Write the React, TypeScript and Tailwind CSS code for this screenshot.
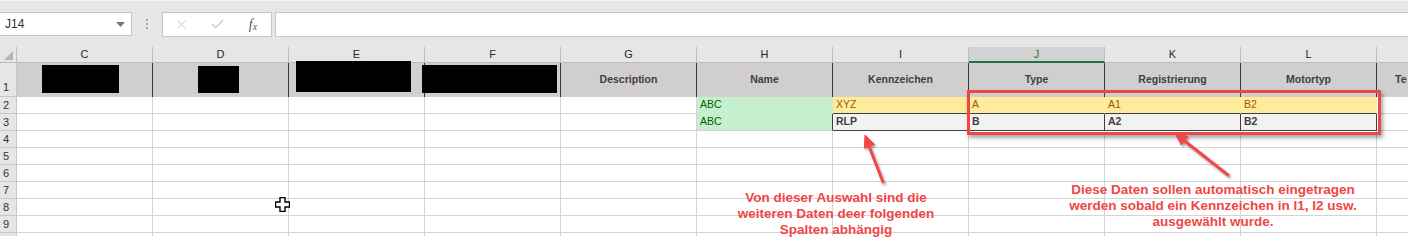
import { X, Check } from "lucide-react";

const COLS = ["C", "D", "E", "F", "G", "H", "I", "J", "K", "L"];

const HEADERS: Record<string, string> = {
  G: "Description",
  H: "Name",
  I: "Kennzeichen",
  J: "Type",
  K: "Registrierung",
  L: "Motortyp",
};

type Kind = "good" | "neutral" | "output";
type Cell = { text: string; kind: Kind };

const DATA: Record<number, Record<string, Cell>> = {
  2: {
    H: { text: "ABC", kind: "good" },
    I: { text: "XYZ", kind: "neutral" },
    J: { text: "A", kind: "neutral" },
    K: { text: "A1", kind: "neutral" },
    L: { text: "B2", kind: "neutral" },
  },
  3: {
    H: { text: "ABC", kind: "good" },
    I: { text: "RLP", kind: "output" },
    J: { text: "B", kind: "output" },
    K: { text: "A2", kind: "output" },
    L: { text: "B2", kind: "output" },
  },
};

// redaction boxes over row 1
const REDACTED: Record<string, string> = {
  C: "left-[25px] top-[2px] w-[77px] h-[28px]",
  D: "left-[45px] top-[3px] w-[41px] h-[27px]",
  E: "left-[7px] top-[-2px] w-[115px] h-[31px]",
  F: "left-[-3px] top-[2px] w-[135px] h-[28px]",
};

const cellClass = (row: number, col: string) => {
  const cell = DATA[row]?.[col];
  if (!cell) return "border-r border-b border-[#d4d4d4]";
  if (cell.kind === "good") {
    const right = row === 3 ? "border-r-[#3f3f3f]" : "border-r-[#c6efce]";
    const bottom = row === 3 ? "border-b-[#d4d4d4]" : "border-b-[#c6efce]";
    return `bg-[#c6efce] text-[#006100] border-r border-b ${right} ${bottom}`;
  }
  if (cell.kind === "neutral") {
    return "bg-[#ffeb9c] text-[#9c5700] border-r border-b border-r-[#ffeb9c] border-b-[#3f3f3f]";
  }
  return "bg-[#f2f2f2] text-[#3f3f3f] font-bold border-r border-b border-[#3f3f3f]";
};

const FormulaBar = () => (
  <div className="h-[47px] bg-[#e6e6e6] border-t border-[#f4f4f4] flex items-start pt-[11px]">
    <div className="w-[132px] h-[24px] bg-white border border-l-0 border-[#c6c6c6] flex items-center justify-between pl-[5px] pr-[6px]">
      <span className="text-[12px] text-[#333]">J14</span>
      <svg width="9" height="5" viewBox="0 0 9 5">
        <path d="M0 0h9L4.5 5z" fill="#777" />
      </svg>
    </div>
    <div className="w-[30px] h-[24px] flex flex-col items-center justify-center gap-[2px]">
      <span className="w-[2px] h-[2px] bg-[#a8a8a8]" />
      <span className="w-[2px] h-[2px] bg-[#a8a8a8]" />
      <span className="w-[2px] h-[2px] bg-[#a8a8a8]" />
    </div>
    <div className="w-[110px] h-[25px] bg-white border border-[#c6c6c6] flex items-center">
      <div className="w-[36px] flex justify-center">
        <X size={15} strokeWidth={1.3} color="#bdbdbd" />
      </div>
      <div className="w-[36px] flex justify-center">
        <Check size={15} strokeWidth={2.2} color="#c4c4c4" />
      </div>
      <div className="w-[36px] flex justify-center font-['Liberation_Serif',serif] italic text-[#555] leading-none">
        <span className="text-[14px]">f</span>
        <span className="text-[10px] mt-[4px]">x</span>
      </div>
    </div>
    <div className="flex-1 h-[25px] ml-[3px] bg-white border border-r-0 border-[#c6c6c6]" />
  </div>
);

const ColumnHeader = () => (
  <div className="flex h-[16px] bg-[#e6e6e6] text-[11px] text-[#262626]">
    <div className="w-[17px] border-r border-b border-[#bdbdbd] flex items-end justify-end pr-[3px] pb-[2px]">
      <svg width="9" height="9" viewBox="0 0 9 9">
        <path d="M9 0V9H0z" fill="#b4b4b4" />
      </svg>
    </div>
    {COLS.map((c) =>
      c === "J" ? (
        <div key={c} className="w-[136px] bg-[#d2d2d2] border-r border-[#bdbdbd] border-b-2 border-b-[#217346] text-center leading-[15px] text-[#217346]">
          {c}
        </div>
      ) : (
        <div key={c} className="w-[136px] border-r border-b border-[#bdbdbd] text-center leading-[15px]">
          {c}
        </div>
      ),
    )}
    <div className="flex-1 border-b border-[#bdbdbd]" />
  </div>
);

const RowNumber = ({ n, tall = false }: { n: number; tall?: boolean }) => (
  <div
    className={`w-[17px] shrink-0 bg-[#e6e6e6] border-r border-b border-[#c8c8c8] text-[11px] text-[#333] pl-[3px] flex ${
      tall ? "items-end pb-[1px]" : "items-center"
    }`}
  >
    {n}
  </div>
);

const TitleRow = () => (
  <div className="flex h-[34px]">
    <RowNumber n={1} tall />
    {COLS.map((c) => (
      <div
        key={c}
        className="relative w-[136px] shrink-0 bg-[#d0cece] border-r border-[#3a3a3a] flex items-center justify-center text-[10.5px] font-bold text-[#404040]"
      >
        {HEADERS[c]}
        {REDACTED[c] && <div className={`absolute bg-black ${REDACTED[c]}`} />}
      </div>
    ))}
    <div className="flex-1 bg-[#d0cece] flex items-center pl-[18px] text-[10.5px] font-bold text-[#404040] whitespace-nowrap">
      Te
    </div>
  </div>
);

const DataRow = ({ n }: { n: number }) => (
  <div className="flex h-[17px] text-[10.5px]">
    <RowNumber n={n} />
    {COLS.map((c) => (
      <div key={c} className={`w-[136px] shrink-0 flex items-center pl-[3px] ${cellClass(n, c)}`}>
        {DATA[n]?.[c]?.text}
      </div>
    ))}
    <div className="flex-1 border-b border-[#d4d4d4]" />
  </div>
);

const Annotations = () => (
  <>
    <div className="absolute left-[967px] top-[90px] w-[414px] h-[45px] border-[3px] border-[#f04646] shadow-[2px_3px_4px_rgba(0,0,0,0.35)]" />
    <svg className="absolute inset-0 pointer-events-none" width="1408" height="245">
      <defs>
        <filter id="sh" x="-20%" y="-20%" width="140%" height="140%">
          <feDropShadow dx="1.5" dy="2" stdDeviation="1.2" floodColor="#000" floodOpacity="0.35" />
        </filter>
      </defs>
      <g filter="url(#sh)" fill="#f04646" stroke="#f04646">
        <line x1="883" y1="182" x2="869" y2="146" strokeWidth="3" strokeLinecap="round" />
        <polygon points="865,135 874.5,144.4 864.4,148.2" strokeWidth="1" strokeLinejoin="round" />
        <line x1="1228" y1="175" x2="1184" y2="140.5" strokeWidth="3" strokeLinecap="round" />
        <polygon points="1175,133 1188,136.6 1181.3,145" strokeWidth="1" strokeLinejoin="round" />
      </g>
    </svg>
    <div className="absolute left-[716px] top-[190px] w-[240px] text-center text-[13.5px] leading-[16px] font-bold text-[#f04646]">
      Von dieser Auswahl sind die
      <br />
      weiteren Daten deer folgenden
      <br />
      Spalten abhängig
    </div>
    <div className="absolute left-[1033px] top-[182px] w-[360px] text-center text-[13.5px] leading-[16px] font-bold text-[#f04646]">
      Diese Daten sollen automatisch eingetragen
      <br />
      werden sobald ein Kennzeichen in I1, I2 usw.
      <br />
      ausgewählt wurde.
    </div>
    <svg className="absolute left-[275px] top-[197px]" width="15" height="15" viewBox="0 0 15 15">
      <path d="M5 .5h5v4.5h4.5v5H10v4.5H5V10H.5V5H5z" fill="#fff" stroke="#000" strokeWidth="1.4" />
    </svg>
  </>
);

export default function App() {
  return (
    <div className="relative w-[1408px] h-[245px] overflow-hidden bg-white font-['Liberation_Sans',Arial,sans-serif]">
      <FormulaBar />
      <ColumnHeader />
      <TitleRow />
      {[2, 3, 4, 5, 6, 7, 8, 9].map((n) => (
        <DataRow key={n} n={n} />
      ))}
      <div className="flex h-[3px] overflow-hidden">
        <div className="w-[17px] bg-[#e6e6e6] border-r border-[#c8c8c8]" />
        {COLS.map((c) => (
          <div key={c} className="w-[136px] shrink-0 border-r border-[#d4d4d4]" />
        ))}
      </div>
      <Annotations />
    </div>
  );
}
